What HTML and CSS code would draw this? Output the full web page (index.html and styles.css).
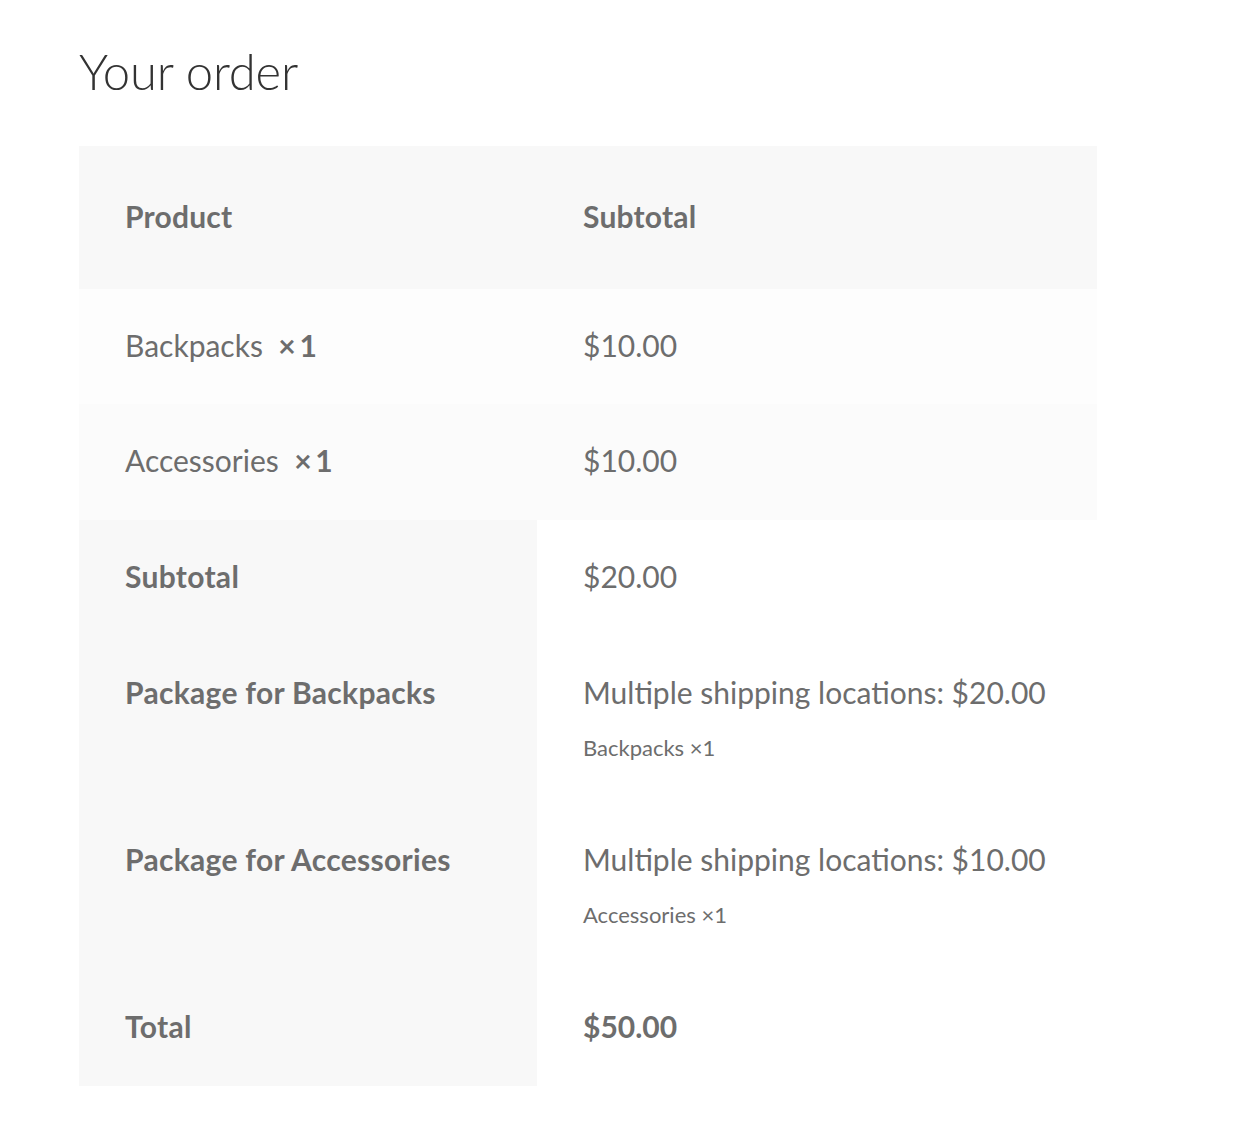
FILE: index.html
```html
<!DOCTYPE html>
<html lang="en">
<head>
<meta charset="utf-8">
<title>Your order</title>
<link rel="stylesheet" href="styles.css">
</head>
<body>
<main class="page">
  <h3 class="order-title">Your order</h3>
  <table class="order-table">
    <colgroup>
      <col class="col-name">
      <col class="col-value">
    </colgroup>
    <thead>
      <tr>
        <th class="head-cell">Product</th>
        <th class="head-cell">Subtotal</th>
      </tr>
    </thead>
    <tbody>
      <tr class="item-row">
        <td class="item-cell">Backpacks&nbsp; <strong class="qty">×&thinsp;1</strong></td>
        <td class="item-cell">$10.00</td>
      </tr>
      <tr class="item-row item-row-alt">
        <td class="item-cell">Accessories&nbsp; <strong class="qty">×&thinsp;1</strong></td>
        <td class="item-cell">$10.00</td>
      </tr>
    </tbody>
    <tfoot>
      <tr>
        <th class="foot-label">Subtotal</th>
        <td class="foot-value">$20.00</td>
      </tr>
      <tr>
        <th class="foot-label">Package for Backpacks</th>
        <td class="foot-value">Multiple shipping locations: $20.00<p class="pkg-items">Backpacks ×1</p></td>
      </tr>
      <tr>
        <th class="foot-label">Package for Accessories</th>
        <td class="foot-value">Multiple shipping locations: $10.00<p class="pkg-items">Accessories ×1</p></td>
      </tr>
      <tr>
        <th class="foot-label">Total</th>
        <td class="foot-value"><strong class="total">$50.00</strong></td>
      </tr>
    </tfoot>
  </table>
</main>
</body>
</html>
```

FILE: styles.css
```css
html, body {
  margin: 0;
  padding: 0;
  background: #ffffff;
}

body {
  font-family: Lato, "Noto Sans", "Liberation Sans", sans-serif;
  color: #6d6d6d;
}

.page {
  padding: 0 0 0 79px;
}

.order-title {
  margin: 0;
  padding-top: 40px;
  font-size: 49px;
  line-height: 62px;
  font-weight: 300;
  color: #333333;
  letter-spacing: -0.2px;
}

.order-table {
  margin-top: 44px;
  width: 1018px;
  border-collapse: collapse;
  border-spacing: 0;
  table-layout: fixed;
  font-size: 30px;
  line-height: 52px;
}

.col-name { width: 458px; }
.col-value { width: 560px; }

.head-cell {
  text-align: left;
  font-weight: 700;
  letter-spacing: 0.2px;
  background: #f8f8f8;
  padding: 44px 46px 47px;
}

.item-cell {
  background: #fdfdfd;
  padding: 30px 46px 33px;
}

.item-row-alt .item-cell {
  background: #fbfbfb;
  padding-bottom: 34px;
}

.qty {
  font-weight: 700;
}

.foot-label {
  text-align: left;
  vertical-align: top;
  font-weight: 700;
  letter-spacing: 0.3px;
  background: #f8f8f8;
  padding: 30px 46px 34px;
}

.foot-value {
  vertical-align: top;
  background: #ffffff;
  padding: 30px 46px 34px;
}

.pkg-items {
  margin: 12px 0 4px;
  font-size: 22px;
  line-height: 35px;
}

.total {
  font-weight: 700;
}
```
